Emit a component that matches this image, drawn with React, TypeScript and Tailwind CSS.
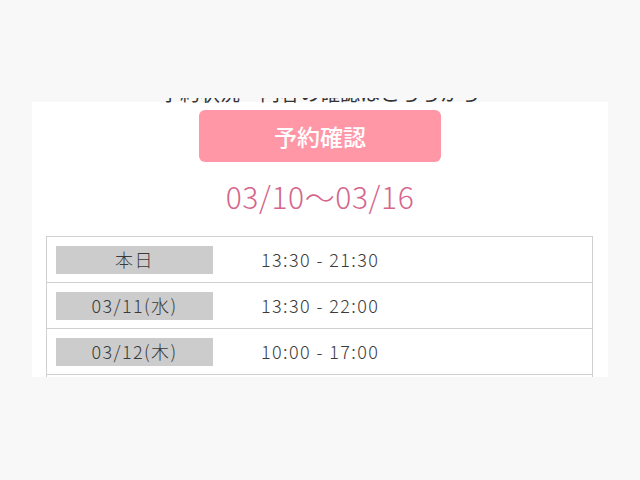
import React from "react";

const rows = [
  { label: "本日", time: "13:30 - 21:30" },
  { label: "03/11(水)", time: "13:30 - 22:00" },
  { label: "03/12(木)", time: "10:00 - 17:00" },
  { label: "03/13(金)", time: "10:00 - 17:00" },
];

export default function App() {
  return (
    <div
      className="w-[640px] h-[480px] bg-[#f8f8f8] pt-[98px]"
      style={{ fontFamily: '"Noto Sans CJK JP", "Noto Sans", sans-serif' }}
    >
      <div className="ml-[32px] w-[576px] h-[279px] overflow-hidden">
        <div className="mt-[4px] w-[576px] h-[275px] bg-white flex flex-col items-center">
          <div className="shrink-0 mt-[-21px] h-[24px] leading-[24px] text-[20px] text-[#333] whitespace-nowrap">
            予約状況・内容の確認はこちらから
          </div>
          <div className="shrink-0 mt-[5px] w-[242px] h-[52px] rounded-[6px] bg-[#ff97a7] flex items-center justify-center text-white text-[23px] font-medium">
            予約確認
          </div>
          <div className="shrink-0 mt-[13px] h-[42px] leading-[42px] text-[30px] font-light tracking-[0.6px] text-[#d5668c]">
            03/10〜03/16
          </div>
          <div className="shrink-0 mt-[19px] w-[547px] border border-[#d0d0d0] border-b-0 self-start ml-[14px]">
            {rows.map((r) => (
              <div
                key={r.label}
                className="h-[46px] border-b border-[#d0d0d0] flex items-center"
              >
                <div className="ml-[9px] w-[157px] h-[28px] bg-[#cccccc] flex items-center justify-center text-[18px] font-light tracking-[1.4px] text-[#3a3a3a]">
                  {r.label}
                </div>
                <div className="ml-[48px] text-[18px] font-light tracking-[1.4px] text-[#3a3a3a]">{r.time}</div>
              </div>
            ))}
          </div>
        </div>
      </div>
    </div>
  );
}
